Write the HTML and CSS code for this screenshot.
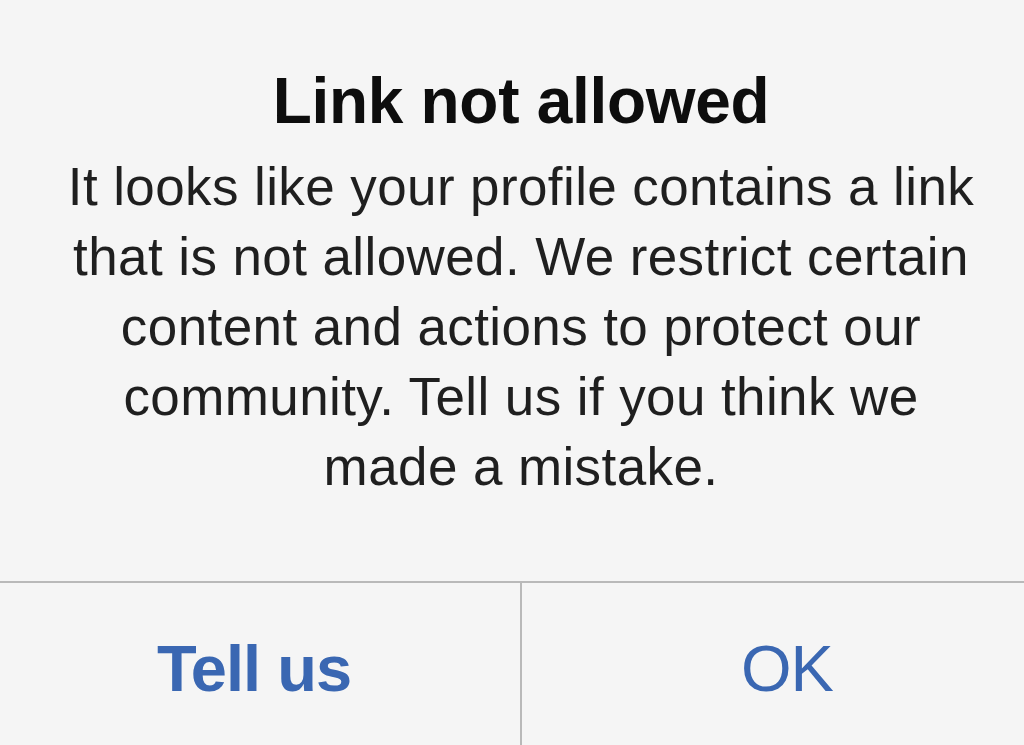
FILE: index.html
```html
<!DOCTYPE html>
<html lang="en">
<head>
<meta charset="utf-8">
<title>Link not allowed</title>
<link rel="stylesheet" href="styles.css">
</head>
<body>
<div class="alert">
  <div class="alert-content">
    <h1 class="alert-title">Link not allowed</h1>
    <p class="alert-message">It looks like your profile contains a link<br>that is not allowed. We restrict certain<br>content and actions to protect our<br>community. Tell us if you think we<br>made a mistake.</p>
  </div>
  <div class="alert-actions">
    <button class="alert-btn btn-primary" type="button">Tell us</button>
    <button class="alert-btn btn-secondary" type="button">OK</button>
  </div>
</div>
</body>
</html>
```
FILE: styles.css
```css
html, body {
  margin: 0;
  padding: 0;
  height: 100%;
  background: #f5f5f5;
  overflow: hidden;
}
body {
  font-family: "Liberation Sans", Arial, sans-serif;
  color: #111;
}
.alert {
  display: flex;
  flex-direction: column;
  height: 100%;
}
.alert-content {
  padding: 62px 0 0 18px;
  height: 581px;
  box-sizing: border-box;
  text-align: center;
  flex: none;
}
.alert-title {
  margin: 0 0 12px;
  font-size: 64px;
  line-height: 78px;
  font-weight: bold;
  letter-spacing: -0.3px;
  color: #0d0d0d;
}
.alert-message {
  margin: 0;
  font-size: 53px;
  line-height: 70px;
  letter-spacing: 0.4px;
  color: #1f1f1f;
}
.alert-actions {
  display: grid;
  grid-template-columns: 1fr 1fr;
  border-top: 2px solid #b9b9b9;
  padding-left: 20px;
  flex: 1;
}
.alert-btn {
  appearance: none;
  background: transparent;
  border: 0;
  margin: 0;
  padding: 10px 0 0;
  font-family: "Liberation Sans", Arial, sans-serif;
  font-size: 65px;
  line-height: 78px;
  color: #3a67b2;
  text-align: center;
}
.btn-primary {
  font-weight: bold;
  letter-spacing: -1px;
  padding-right: 32px;
  border-right: 2px solid #b9b9b9;
  margin-left: -20px;
  padding-left: 20px;
}
.btn-secondary {
  font-weight: normal;
  letter-spacing: -1px;
  padding-left: 28px;
}
```
